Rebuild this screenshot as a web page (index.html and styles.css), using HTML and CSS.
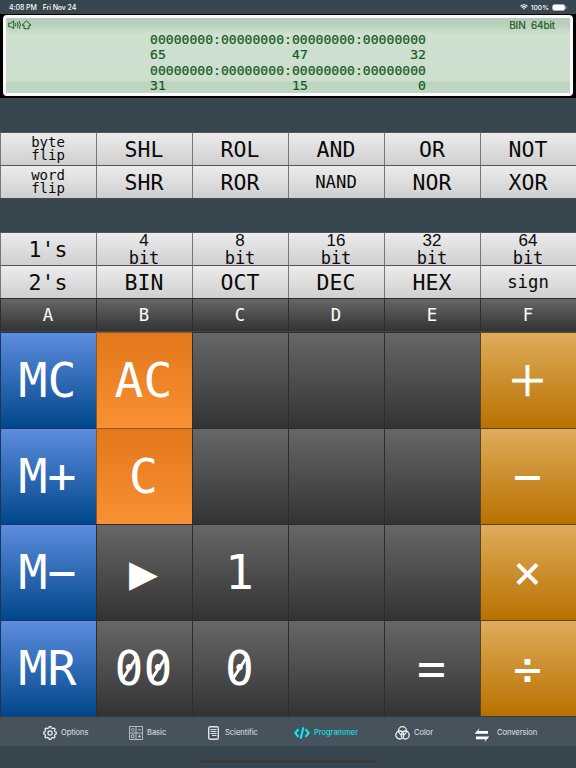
FILE: index.html
```
<!DOCTYPE html>
<html lang="en">
<head>
  <meta charset="UTF-8">
  <meta name="viewport" content="width=device-width, initial-scale=1.0">
  <title>Programmer Calculator</title>
  <link rel="stylesheet" href="styles.css">
</head>
<body>
  <div class="status">
    <span>4:08 PM</span>
    <span class="date">Fri Nov 24</span>
    <div class="status-right">
      <svg width="8" height="6" viewBox="0 0 16 12" fill="none" stroke="#fff" stroke-width="2.3">
        <path d="M1 4.5Q8-1.500 15 4.500M3.500 7.300Q8 3.500 12.500 7.300"/>
        <path d="M8 11.500L5.800 9.200Q8 7.500 10.200 9.200Z" fill="#fff" stroke="none"/>
      </svg>
      <span>100%</span>
      <svg width="15" height="7" viewBox="0 0 15 7">
        <rect x=".5" y=".5" width="12.500" height="6" rx="2" fill="#fff" stroke="#aab2b8" stroke-width=".7"/>
        <path d="M14 2.300v2.400" stroke="#aab2b8"/>
      </svg>
    </div>
  </div>

  <div class="lcd">
    <div class="lcd-screen">
      <div class="lcd-top">
        <svg width="24" height="10" viewBox="0 0 24 10" fill="none" stroke="#17601c" stroke-width="1">
          <path d="M.7 3.200H2.800L5.700.9V8.700L2.800 6.700H.7Z"/>
          <path d="M7.400 3.300Q8.400 4.900 7.400 6.500M9.300 2.200Q10.900 4.900 9.300 7.600M11.200 1Q13.500 4.900 11.200 8.800"/>
          <path d="M18.500.9L23 5.200H21V8.700H16V5.200H14Z"/>
        </svg>
        <span>BIN&nbsp; 64bit</span>
      </div>
      <div class="bits">
        <div>00000000:00000000:00000000:00000000</div>
        <div class="bit-index"><span>65</span><span>47</span><span>32</span></div>
        <div>00000000:00000000:00000000:00000000</div>
        <div class="bit-index"><span>31</span><span>15</span><span>0</span></div>
      </div>
    </div>
  </div>

  <div class="keys logic">
    <div class="key tiny">byte<br>flip</div>
    <div class="key">SHL</div>
    <div class="key">ROL</div>
    <div class="key">AND</div>
    <div class="key">OR</div>
    <div class="key">NOT</div>
    <div class="key tiny">word<br>flip</div>
    <div class="key">SHR</div>
    <div class="key">ROR</div>
    <div class="key small">NAND</div>
    <div class="key">NOR</div>
    <div class="key">XOR</div>
  </div>

  <div class="keys modes">
    <div class="key">1's</div>
    <div class="key size"><b>4</b>bit</div>
    <div class="key size"><b>8</b>bit</div>
    <div class="key size"><b>16</b>bit</div>
    <div class="key size"><b>32</b>bit</div>
    <div class="key size"><b>64</b>bit</div>
    <div class="key">2's</div>
    <div class="key">BIN</div>
    <div class="key">OCT</div>
    <div class="key">DEC</div>
    <div class="key">HEX</div>
    <div class="key small">sign</div>
    <div class="key dark small">A</div>
    <div class="key dark small">B</div>
    <div class="key dark small">C</div>
    <div class="key dark small">D</div>
    <div class="key dark small">E</div>
    <div class="key dark small">F</div>
  </div>

  <div class="keys pad">
    <div class="key blue">MC</div>
    <div class="key orange">AC</div>
    <div class="key dark"></div>
    <div class="key dark"></div>
    <div class="key dark"></div>
    <div class="key gold plus">＋</div>
    <div class="key blue">M+</div>
    <div class="key orange">C</div>
    <div class="key dark"></div>
    <div class="key dark"></div>
    <div class="key dark"></div>
    <div class="key gold">−</div>
    <div class="key blue">M−</div>
    <div class="key dark play">▶</div>
    <div class="key dark">1</div>
    <div class="key dark"></div>
    <div class="key dark"></div>
    <div class="key gold">×</div>
    <div class="key blue">MR</div>
    <div class="key dark"><span class="zero">0</span><span class="zero">0</span></div>
    <div class="key dark"><span class="zero">0</span></div>
    <div class="key dark"></div>
    <div class="key dark">=</div>
    <div class="key gold">÷</div>
  </div>

  <div class="tabs">
    <div class="tab options">
      <svg width="14" height="14" viewBox="0 0 14 14" fill="none" stroke="#f0f2f3" stroke-width="1.200" stroke-linejoin="round">
        <path d="M5.700 2L6.100.7H7.900L8.300 2L9.700 2.600L10.900 1.900L12.100 3.100L11.400 4.300L12 5.700L13.300 6.100V7.900L12 8.300L11.400 9.700L12.100 10.900L10.900 12.100L9.700 11.400L8.300 12L7.900 13.300H6.100L5.700 12L4.300 11.400L3.100 12.100L1.900 10.900L2.600 9.700L2 8.300L.7 7.900V6.100L2 5.700L2.600 4.300L1.900 3.100L3.100 1.900L4.300 2.600Z"/>
        <circle cx="7" cy="7" r="2.100"/>
      </svg>
      <span>Options</span>
    </div>
    <div class="tab basic">
      <svg width="14" height="14" viewBox="0 0 14 14" fill="none" stroke="#c3c9cd" stroke-width=".9">
        <path d="M.5.5H13.500V13.500H.5ZM7 .5V13.500M.5 7H13.500"/>
        <path d="M3.800 2L5.500 3.800L3.800 5.500L2 3.800ZM8.800 3.800H12M8.800 10.300H12M10.400 8.700V12M2.500 8.900H5V11.700H2.500Z"/>
      </svg>
      <span>Basic</span>
    </div>
    <div class="tab scientific">
      <svg width="11" height="14" viewBox="0 0 11 14" fill="none" stroke="#e2e5e7" stroke-width="1.400">
        <rect x=".7" y=".7" width="9.600" height="12.600" rx="1.500"/>
        <path d="M2.500 3.500H8.500M2.500 5.500H8.500M2.500 7.500H8.500M4 9.500H8.500" stroke-width="1"/>
      </svg>
      <span>Scientific</span>
    </div>
    <div class="tab programmer active">
      <svg width="16" height="12" viewBox="0 0 16 12" fill="none" stroke="#0ceef4" stroke-width="2" stroke-linejoin="round">
        <path d="M4.500 2.200L1.300 6L4.500 9.800M11.500 2.200L14.700 6L11.500 9.800M9.400.3L6.600 11.700"/>
      </svg>
      <span>Programmer</span>
    </div>
    <div class="tab color">
      <svg width="15" height="14" viewBox="0 0 15 14" fill="none" stroke="#f0f2f3" stroke-width="1.300">
        <circle cx="7.500" cy="4.700" r="4"/>
        <circle cx="4.800" cy="9" r="4"/>
        <circle cx="10.200" cy="9" r="4"/>
      </svg>
      <span>Color</span>
    </div>
    <div class="tab conversion">
      <svg width="14" height="14" viewBox="0 0 14 14" fill="#fff">
        <path d="M0 5.300L4.500.3L3.500 3H13V5.700H0Z"/>
        <path d="M14 9L9.500 14L10.500 11.200H1V8.500H14Z"/>
      </svg>
      <span>Conversion</span>
    </div>
  </div>
  <div class="home"></div>
</body>
</html>
```
FILE: styles.css
```
body {
  margin: 0;
  width: 576px;
  height: 768px;
  overflow: hidden;
  background: #384650;
  font-family: Inter, "Liberation Sans", sans-serif;
}
.status {
  display: flex;
  align-items: center;
  box-sizing: border-box;
  height: 14px;
  padding: 0 9px;
  color: #fff;
  font-size: 7px;
  font-weight: 500;
  letter-spacing: -.1px;
}
.date {
  margin-left: 6px;
}
.status-right {
  display: flex;
  align-items: center;
  gap: 3px;
  margin-left: auto;
}
.status-right span {
  font-size: 6.8px;
  letter-spacing: 0;
}

/* display */
.lcd {
  box-sizing: border-box;
  height: 84px;
  padding: 1px 3px 2px;
  background: #000;
}
.lcd-screen {
  box-sizing: border-box;
  height: 81px;
  border: 3px solid #fbf8f9;
  border-radius: 4px;
  background: linear-gradient(#b5cab9, #bfd2c1 12%, #cfe1cf 22%, #cddfce 45%, #cedecf 60%, #cce0cc 83%, #bbd3bf 87%, #c0d8c4);
  color: #17601c;
}
.lcd-top {
  display: flex;
  justify-content: space-between;
  height: 14px;
  padding: 2px 15px 0 2px;
  box-sizing: border-box;
  font-size: 10px;
  line-height: 10px;
  letter-spacing: -.1px;
  -webkit-text-stroke: .2px #17601c;
}
.bits {
  width: 276px;
  margin: 0 auto;
  color: #12591a;
  font-family: "DejaVu Sans Mono", monospace;
  font-size: 13.1px;
  line-height: 15.4px;
  -webkit-text-stroke: .2px #12591a;
}
.bit-index {
  display: flex;
  justify-content: space-between;
}
.bit-index span:nth-child(2) {
  width: 16px;
  margin-left: auto;
  margin-right: 102px;
}
.bit-index span:last-child {
  width: 16px;
  text-align: right;
}

/* keys */
.keys {
  display: grid;
  grid-template-columns: repeat(6, 96px);
  grid-auto-rows: 33px;
  font-family: "DejaVu Sans Mono", monospace;
}
.key {
  display: flex;
  align-items: center;
  justify-content: center;
  box-sizing: border-box;
  border-top: 1px solid #555;
  border-left: 1px solid #777;
  padding: 1px 1px 0 0;
  background: linear-gradient(#ececec, #cfcfcf);
  color: #0a0a0a;
  font-size: 21.5px;
  line-height: 1;
  text-align: center;
}
.logic {
  margin-top: 34px;
  border-bottom: 1px solid #444b50;
}
.modes {
  margin-top: 33px;
  height: 100px;
}
.key.small {
  padding-top: 2px;
  font-size: 17.3px;
}
.key.tiny {
  padding-top: 0;
  font-size: 14px;
  line-height: 13px;
}
.key.size {
  flex-direction: column;
  font-size: 17px;
  line-height: 16.500px;
}
.size b {
  font-family: "Liberation Sans", sans-serif;
  font-weight: normal;
}
.key.dark {
  background: linear-gradient(#676767, #333);
  border-color: #2d2d2d;
  color: #fff;
}
.pad {
  grid-auto-rows: 96px;
}
.pad .key {
  padding: 0 2px 2px 0;
  color: #fff;
  font-size: 48px;
}
.key.blue {
  background: linear-gradient(#5d8ddf, #00468a);
  border-color: #1c355c;
}
.key.orange {
  background: linear-gradient(#e2771b, #fa9034);
  border-color: #975320;
}
.key.gold {
  background: linear-gradient(#dfac5b, #b87100);
  border-color: #634316;
}
.pad .plus {
  padding-bottom: 4px;
  font-family: "Noto Sans CJK JP", sans-serif;
  font-size: 41px;
  -webkit-text-stroke: .8px #fff;
}
.zero {
  position: relative;
}
/* slash through the zero */
.zero::after {
  content: '';
  position: absolute;
  top: 12px;
  left: 13px;
  width: 3px;
  height: 25px;
  background: #fff;
  transform: rotate(33deg);
}

/* tab bar */
.tabs {
  display: flex;
  box-sizing: border-box;
  height: 30px;
  padding-left: 43px;
  border-top: 1px solid #303c45;
  background: #46535c;
  color: #e3e6e8;
  font-size: 7.5px;
}
.tab {
  display: flex;
  align-items: center;
  gap: 4px;
  box-sizing: border-box;
  height: 31px;
  flex: none;
}
.options {
  width: 86px;
}
.basic {
  width: 79px;
}
.scientific {
  width: 86px;
  gap: 6px;
}
.programmer {
  width: 101px;
}
.color {
  width: 80px;
}
.conversion {
  gap: 8px;
}
.conversion svg {
  padding-top: 4px;
}
.active {
  color: #0ceef4;
}
.home {
  width: 176px;
  height: 3px;
  margin: 14px auto 0;
  border-radius: 2px;
  background: #3c3a3b;
}
```
